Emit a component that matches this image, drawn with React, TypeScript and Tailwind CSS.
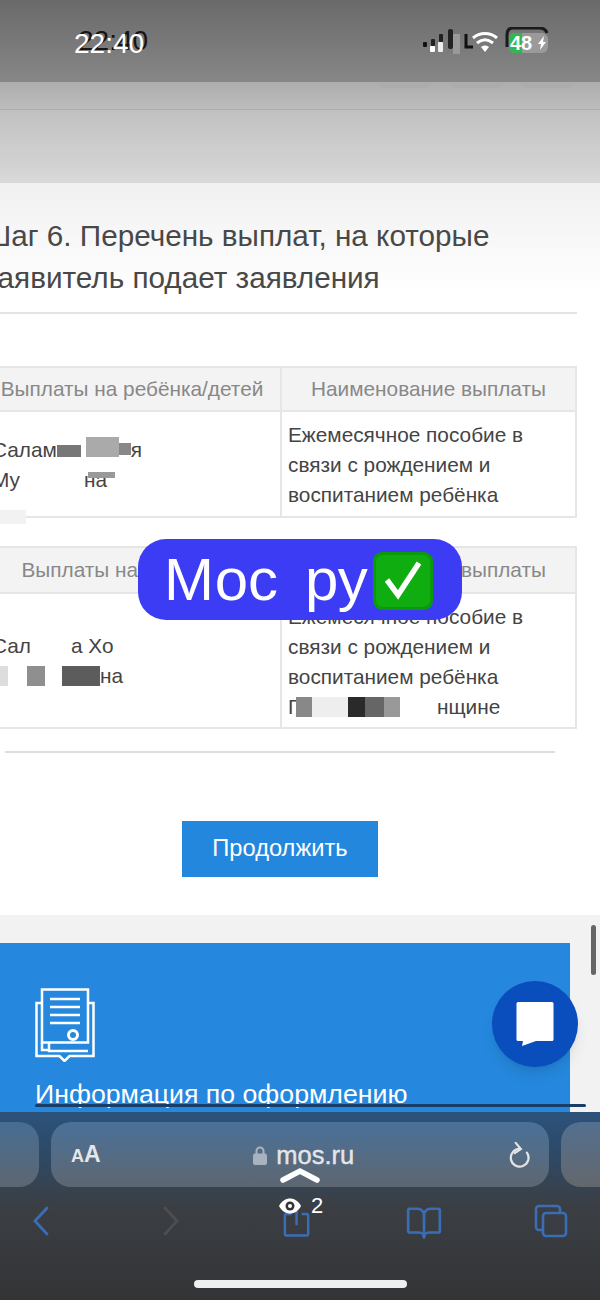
import { BookOpen } from "lucide-react"

function StatusIcons() {
  return (
    <svg width="130" height="30" viewBox="420 28 130 30" className="block">
      <rect x="423" y="43" width="4" height="5" rx="1" fill="#111" />
      <rect x="431" y="40" width="4" height="7" rx="1" fill="#222" />
      <rect x="430" y="47" width="5" height="6" rx="1" fill="#fff" />
      <rect x="439" y="35" width="4" height="8" rx="1" fill="#222" />
      <rect x="438" y="43" width="5" height="10" rx="1" fill="#eee" />
      <rect x="448" y="30" width="5" height="20" rx="2" fill="#222" />
      <rect x="453" y="35" width="7" height="20" fill="#999" />
      <path d="M466 35v13h7" fill="none" stroke="#111" strokeWidth="3" />
      <path d="M473 39c7-6 17-6 24 0M477 44c5-4 11-4 16 0" fill="none" stroke="#fff" strokeWidth="3" />
      <path d="M481 48c3-2 5-2 8 0l-4 5z" fill="#fff" />
      <path d="M507 48v-12c0-5 2-7 6-7h26c5 0 7 2 8 5" fill="none" stroke="#1b1b1b" strokeWidth="3" />
      <rect x="509" y="34" width="39" height="20" rx="6" fill="#9a9a9a" />
      <path d="M515 34h7v20h-7a6 6 0 0 1-6-6v-8a6 6 0 0 1 6-6z" fill="#2fb84f" />
      <path d="M544 37l-6 8h3l-1 6 6-8h-3z" fill="#fff" />
    </svg>
  )
}

function DocIcon() {
  return (
    <svg width="60" height="74" viewBox="0 0 60 74" fill="none" stroke="#fff" strokeWidth="2.500" className="block">
      <path d="M7 1.500h46v53H7z" />
      <path d="M6 15H1.500v53h23l5 5 5-5h24V15H54" />
      <path d="M7 55v7h7M14 55v8h39" />
      <path d="M15 11h30M15 19h30M15 27h30M15 35h30" />
      <circle cx="38" cy="47" r="4.500" strokeWidth="3" />
    </svg>
  )
}

function NameBlock({ children }: { children: React.ReactNode }) {
  return <div className="flex flex-col justify-center pl-2 pt-2 pb-[7px] border-r-2 border-[#e6e6e6] text-[#444] text-[20.800px] leading-[30px]">{children}</div>
}

export default function App() {
  return (
    <div className="relative w-[600px] h-[1300px] overflow-hidden bg-white [font-family:'Liberation_Sans',Arial,sans-serif]">
      {/* status bar */}
      <div className="h-[82px] bg-gradient-to-b from-[#6a6a6a] to-[#878787] flex items-start justify-between pl-[74px] pr-[50px] pt-[28px]">
        <span className="text-white text-[28px] leading-[32px] [text-shadow:4px_-3px_0_#151515]">22:40</span>
        <div className="relative -mt-[1px]">
          <StatusIcons />
          <span className="absolute left-[90px] top-[4px] text-white font-bold text-[20px] leading-[24px]">48</span>
        </div>
      </div>

      {/* site header, dimmed */}
      <div className="h-[28px] bg-gradient-to-b from-[#adadad] to-[#bcbcbc] border-b border-[#aeaeae] flex justify-end gap-[18px] pr-[26px]">
        <div className="w-[53px] h-[6px] rounded-b-lg bg-[#acacac]" />
        <div className="w-[53px] h-[6px] rounded-b-lg bg-[#acacac]" />
        <div className="w-[53px] h-[6px] rounded-b-lg bg-[#acacac]" />
      </div>
      <div className="h-[73px] bg-[linear-gradient(#c0c0c0,#cfcfcf_58%,#cdcdcd_59%,#d9d9d9)]" />

      {/* step */}
      <div className="h-[732px] bg-[linear-gradient(#f0f0f0,#ffffff_110px)] flex flex-col">
        <h1 className="mt-[32px] ml-[-16px] text-[#484848] text-[29.700px] leading-[42px] font-normal whitespace-nowrap">
          Шаг 6. Перечень выплат, на которые
          <br />
          заявитель подает заявления
        </h1>
        <div className="mt-[13px] w-[577px] h-[2px] bg-[#e4e4e4]" />

        <div className="mt-[52px] ml-[-18px] w-[595px] border-2 border-[#e6e6e6] grid grid-cols-[298px_1fr]">
          <div className="h-[44px] bg-[#f3f3f3] border-r-2 border-b-2 border-[#e6e6e6] flex items-center justify-center text-[#888] text-[20.800px] whitespace-nowrap">Выплаты на ребёнка/детей</div>
          <div className="h-[44px] bg-[#f3f3f3] border-b-2 border-[#e6e6e6] flex items-center justify-center text-[#888] text-[20.800px] whitespace-nowrap">Наименование выплаты</div>
          <NameBlock>
            <div className="flex items-center">
              Салам
              <span className="w-[24px] h-[12px] bg-[#777] mt-[2px]" />
              <span className="w-[5px]" />
              <span className="w-[33px] h-[20px] bg-[#aaa] -mt-[5px]" />
              <span className="w-[12px] h-[12px] bg-[#888] -mt-[2px]" />я
            </div>
            <div className="flex items-center">
              Му
              <span className="w-[64px]" />
              на
            </div>
          </NameBlock>
          <div className="pl-[6px] pt-[8px] pb-[6px] text-[#444] text-[20.800px] leading-[30px] whitespace-nowrap">
            Ежемесячное пособие в
            <br />
            связи с рождением и
            <br />
            воспитанием ребёнка
          </div>
        </div>

        <div className="mt-[28px] ml-[-18px] w-[595px] border-2 border-[#e6e6e6] grid grid-cols-[298px_1fr]">
          <div className="h-[46px] bg-[#f3f3f3] border-r-2 border-b-2 border-[#e6e6e6] flex items-center justify-center text-[#888] text-[20.800px] whitespace-nowrap">Выплаты на заявителя</div>
          <div className="h-[46px] bg-[#f3f3f3] border-b-2 border-[#e6e6e6] flex items-center justify-center text-[#888] text-[20.800px] whitespace-nowrap">Наименование выплаты</div>
          <NameBlock>
            <div className="flex items-center">
              Сал
              <span className="w-[40px]" />а Хо
            </div>
            <div className="flex items-center pl-[8px]">
              <span className="w-[8px] h-[20px] bg-[#ddd]" />
              <span className="w-[19px]" />
              <span className="w-[18px] h-[20px] bg-[#8f8f8f]" />
              <span className="w-[17px]" />
              <span className="w-[38px] h-[20px] bg-[#5c5c5c]" />
              на
            </div>
          </NameBlock>
          <div className="pl-[6px] pt-[8px] pb-[5px] text-[#444] text-[20.800px] leading-[30px] whitespace-nowrap">
            Ежемесячное пособие в
            <br />
            связи с рождением и
            <br />
            воспитанием ребёнка
            <br />
            <div className="flex items-center">
              <span className="w-[8px] overflow-hidden">Г</span>
              <span className="w-[16px] h-[20px] bg-[#888]" />
              <span className="w-[36px] h-[20px] bg-[#eee]" />
              <span className="w-[17px] h-[20px] bg-[#2a2a2a]" />
              <span className="w-[19px] h-[20px] bg-[#666]" />
              <span className="w-[16px] h-[20px] bg-[#999]" />
              <span className="w-[37px]" />
              нщине
            </div>
          </div>
        </div>

        <div className="mt-[22px] ml-[5px] w-[550px] h-[2px] bg-[#dedede]" />

        <button className="mt-[68px] ml-[182px] w-[196px] h-[56px] bg-[#2388dd] text-white text-[23.700px]">Продолжить</button>
      </div>

      {/* info panel */}
      <div className="h-[197px] bg-[#f2f2f2] pt-[28px]">
        <div className="w-[570px] h-[169px] bg-[#2588de] pt-[45px] pl-[35px] text-white overflow-hidden">
          <DocIcon />
          <div className="mt-[16px] text-[26.700px] leading-[32px] whitespace-nowrap">Информация по оформлению</div>
        </div>
      </div>

      {/* safari toolbar */}
      <div className="h-[188px] bg-[linear-gradient(#2c527b,#2d4a69_20%,#3b3f44_50%,#333436)] relative">
        <div className="pt-[10px] flex gap-[12px] ml-[-460px]">
          <div className="w-[499px] h-[65px] rounded-[20px] bg-gradient-to-b from-[#466d94] to-[#5d6670] shrink-0" />
          <div className="w-[498px] h-[65px] rounded-[20px] bg-gradient-to-b from-[#49719a] to-[#5d6670] shrink-0 flex items-center justify-between pl-[20px] pr-[19px] text-[#e6e6e6]">
            <span className="font-bold text-[23px] leading-none">
              <span className="text-[18px]">A</span>A
            </span>
            <span className="flex items-center gap-[9px] text-[25.500px] [-webkit-text-stroke:0.400px_#e6e6e6] mt-[2px]">
              <svg width="14" height="19" viewBox="0 0 14 19" fill="#a9b3bf">
                <path d="M3.500 8V5a3.500 3.500 0 0 1 7 0v3" fill="none" stroke="#a9b3bf" strokeWidth="2" />
                <rect y="7.500" width="14" height="11.500" rx="2" />
              </svg>
              mos.ru
            </span>
            <svg width="23" height="28" viewBox="0 0 24 30" fill="none" stroke="#e4e4e4" strokeWidth="2.400" strokeLinecap="round">
              <path d="M14 8.500a9.500 9.500 0 1 0 7 4" />
              <path d="M9 2l5.500 6.500L8 13" />
            </svg>
          </div>
          <div className="w-[498px] h-[65px] rounded-[20px] bg-gradient-to-b from-[#53708f] to-[#63676c] shrink-0" />
        </div>

        <div className="mt-[15px] flex items-center pl-[33px] h-[38px]">
          <svg width="16" height="30" viewBox="0 0 16 30" fill="none" stroke="#3a6db4" strokeWidth="2.800" strokeLinecap="round">
            <path d="M14 2L2 15l12 13" />
          </svg>
          <svg width="16" height="30" viewBox="0 0 16 30" fill="none" stroke="#4c4e51" strokeWidth="2.800" strokeLinecap="round" className="ml-[114px]">
            <path d="M2 2l12 13L2 28" />
          </svg>
          <svg width="28" height="33" viewBox="0 4 30 34" fill="none" stroke="#3a6db4" strokeWidth="2.600" className="ml-[104px]">
            <path d="M9 13H4a2 2 0 0 0-2 2v19a2 2 0 0 0 2 2h21a2 2 0 0 0 2-2V15a2 2 0 0 0-2-2h-5" />
            <path d="M14.500 2v23" />
          </svg>
          <BookOpen size={38} strokeWidth={1.700} className="text-[#3a6db4] ml-[94px] mt-[3px]" />
          <svg width="34" height="34" viewBox="0 0 34 34" fill="none" stroke="#3a6db4" strokeWidth="2.600" className="ml-[91px]">
            <rect x="9" y="9" width="23" height="23" rx="3" />
            <path d="M9 26H5a3 3 0 0 1-3-3V5a3 3 0 0 1 3-3h18a3 3 0 0 1 3 3v4" />
          </svg>
        </div>

        <div className="mt-[40px] mx-auto w-[213px] h-[8px] rounded-full bg-[#efefef]" />
      </div>

      {/* overlays */}
      <div className="absolute left-[138px] top-[539px] w-[324px] h-[81px] rounded-[28px] bg-[#3d3cf5] flex items-center pl-[26px] text-white text-[60px] leading-none">
        <span>Мос</span>
        <span className="ml-[27px]">ру</span>
        <svg width="60" height="58" viewBox="0 0 60 58" className="ml-[5px] mt-[2px]">
          <rect width="60" height="58" rx="9" fill="#0a9a0a" />
          <rect x="3" y="3" width="54" height="52" rx="7" fill="#10ad10" />
          <path d="M14 28l11 15L46 11" fill="none" stroke="#fff" strokeWidth="5.500" />
        </svg>
      </div>

      <div className="absolute left-0 top-[510px] w-[26px] h-[14px] bg-[#f2f2f2]" />
      <div className="absolute left-[88px] top-[472px] w-[27px] h-[6px] bg-[#999]" />
      <div className="absolute left-[591px] top-[925px] w-[5px] h-[50px] rounded-full bg-[#666]" />

      <div className="absolute left-[492px] top-[981px] w-[86px] h-[86px] rounded-full bg-[#0a4dbd] shadow-lg flex items-center justify-center">
        <svg width="38" height="46" viewBox="0 0 38 46" fill="#fff">
          <path d="M2 1h34a1.500 1.500 0 0 1 1.500 1.500v36a1.500 1.500 0 0 1-1.500 1.500H20l-14 5 1-5H2A1.500 1.500 0 0 1 .5 38.500v-36A1.500 1.500 0 0 1 2 1z" />
        </svg>
      </div>

      <div className="absolute left-[35px] top-[1104px] w-[551px] h-[3px] rounded-full bg-[#173e68]" />

      <svg width="40" height="16" viewBox="0 0 40 16" fill="none" stroke="#fff" strokeWidth="5.500" strokeLinecap="round" className="absolute left-[280px] top-[1167px]">
        <path d="M3 13L20 4l17 9" />
      </svg>
      <div className="absolute left-[279px] top-[1194px] flex items-center gap-[10px] text-white text-[22px] leading-[24px]">
        <svg width="22" height="16" viewBox="0 0 22 16">
          <path d="M0 8c5-10 17-10 22 0-5 10-17 10-22 0z" fill="#fff" />
          <circle cx="11" cy="8" r="4.500" fill="#333" />
          <circle cx="11" cy="8" r="2" fill="#fff" />
        </svg>
        2
      </div>
    </div>
  )
}
